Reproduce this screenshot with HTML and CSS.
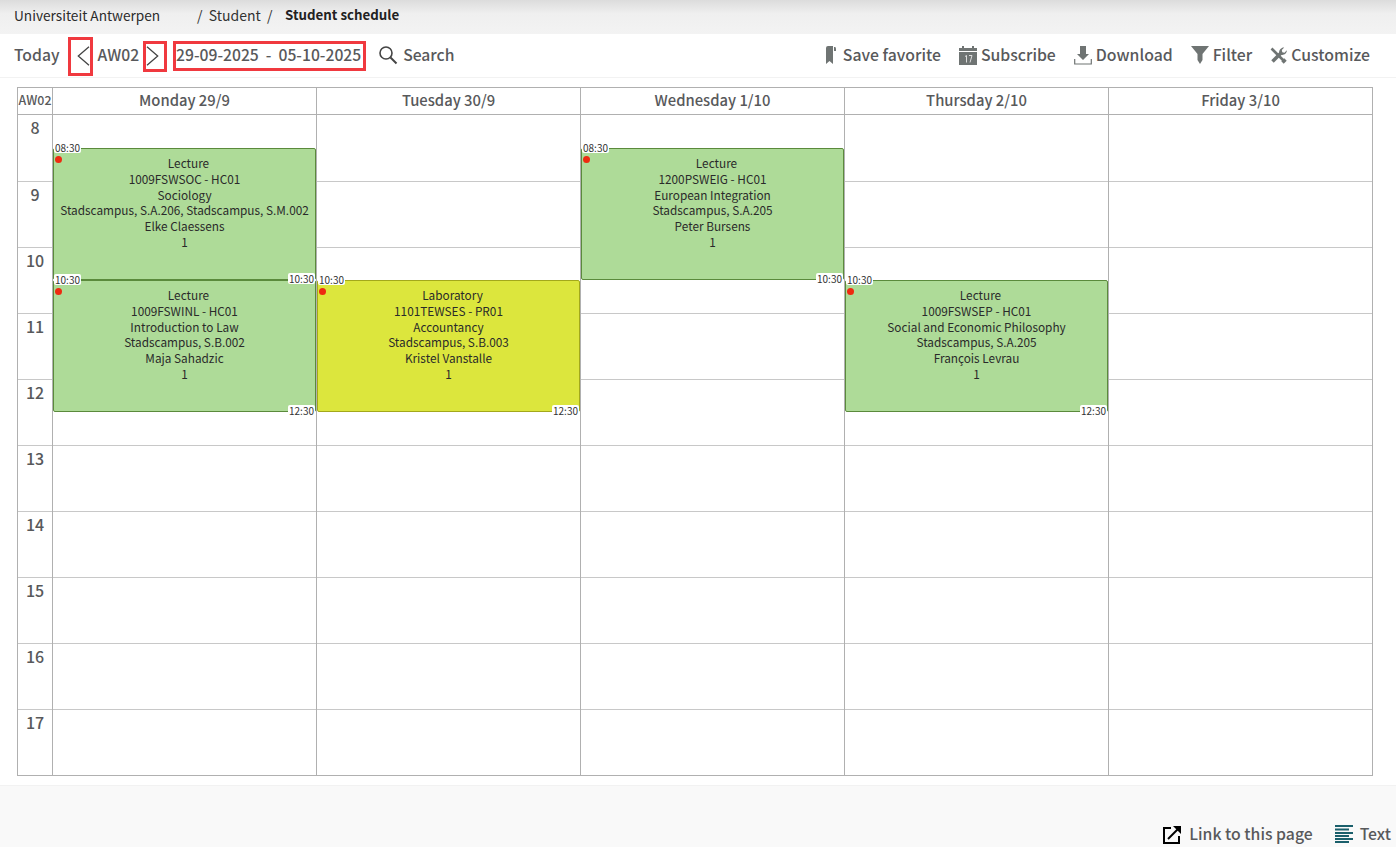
FILE: index.html
```html
<!DOCTYPE html>
<html lang="en">
<head>
<meta charset="utf-8">
<title>Student schedule</title>
<link rel="stylesheet" href="styles.css">
</head>
<body>
<div class="page">
  <header class="crumbs">
    <span class="crumb-home">Universiteit Antwerpen</span>
    <span class="crumb-path">/&nbsp; Student &nbsp;/</span>
    <strong class="crumb-current">Student schedule</strong>
  </header>
  <nav class="toolbar">
    <div class="tools-left">
      <span class="tool today">Today</span>
      <span class="boxed prev"><svg width="13" height="20" viewBox="0 0 13 20"><path d="M12 .7 1.300 10 12 19.300" fill="none" stroke="#444" stroke-width="1.300"/></svg></span>
      <span class="tool week">AW02</span>
      <span class="boxed next"><svg width="13" height="20" viewBox="0 0 13 20"><path d="M1 .7 11.700 10 1 19.300" fill="none" stroke="#444" stroke-width="1.300"/></svg></span>
      <span class="boxed range">29-09-2025&nbsp; -&nbsp; 05-10-2025</span>
      <span class="tool search"><svg width="20" height="20" viewBox="0 0 20 20"><circle cx="8" cy="8" r="6" fill="none" stroke="#444" stroke-width="1.6"/><path d="m12.5 12.5 6 6" stroke="#444" stroke-width="2"/></svg>Search</span>
    </div>
    <div class="tools-right">
      <span class="tool"><svg class="ico-save" width="12" height="20" viewBox="0 0 12 20"><path d="M1 3q0-2 2-2h5v18l-3.500-3L1 19z" fill="#6f7473"/><path d="M9 2h1q1 0 1 2v2H9z" fill="#6f7473"/></svg>Save favorite</span>
      <span class="tool"><svg width="18" height="19" viewBox="0 0 18 19"><rect x="0" y="2" width="18" height="3" fill="#6f7473"/><rect x="0" y="6" width="18" height="13" fill="#6f7473"/><rect x="3" y="0" width="2" height="3" fill="#6f7473"/><rect x="13" y="0" width="2" height="3" fill="#6f7473"/><path d="M6 10.500l1.500-1v7M10 9.500h3l-2 7" fill="none" stroke="#ddd"/></svg>Subscribe</span>
      <span class="tool"><svg width="18" height="20" viewBox="0 0 18 20"><path d="M6 1h6v8h3l-6 6-6-6h3z" fill="#6f7473"/><path d="M.7 14v5h16.600v-5" fill="none" stroke="#6f7473" stroke-width="1.200"/></svg>Download</span>
      <span class="tool"><svg width="18" height="20" viewBox="0 0 18 20"><path d="M0 1h18l-6.500 8v6L9 19l-2.500-4V9z" fill="#6f7473"/></svg>Filter</span>
      <span class="tool"><svg width="17" height="17" viewBox="0 0 17 17"><path d="M1.500 1.500 14 14" fill="none" stroke="#6f7473" stroke-width="2.600"/><path d="M12.500 15.500l3-3" stroke="#6f7473" stroke-width="3.400"/><path d="M2.500 14.500 11.500 5.500" stroke="#6f7473" stroke-width="3.600"/><path d="M9.300 6.500C8.500 3.500 11 .2 14.200.5L11.800 3l.5 2.200 2.200.5L16.800 3.200c.3 3.300-3.300 5.600-6 4.500z" fill="#6f7473"/></svg>Customize</span>
    </div>
  </nav>
  <main class="schedule">
    <div class="calendar">
      <div class="head corner">AW02</div>
      <div class="head">Monday 29/9</div>
      <div class="head">Tuesday 30/9</div>
      <div class="head">Wednesday 1/10</div>
      <div class="head">Thursday 2/10</div>
      <div class="head">Friday 3/10</div>

      <div class="hours">
        <div class="hour first">8</div><div class="hour">9</div><div class="hour">10</div><div class="hour">11</div><div class="hour">12</div><div class="hour">13</div><div class="hour">14</div><div class="hour">15</div><div class="hour">16</div><div class="hour">17</div>
      </div>

      <div class="day">
        <div class="slot first"></div><div class="slot"></div><div class="slot"></div><div class="slot"></div><div class="slot"></div><div class="slot"></div><div class="slot"></div><div class="slot"></div><div class="slot"></div><div class="slot"></div>
        <article class="event lecture from-830">
          <span class="time start">08:30</span><span class="dot"></span><span class="time end">10:30</span>
          <p>Lecture</p><p>1009FSWSOC - HC01</p><p>Sociology</p><p>Stadscampus, S.A.206, Stadscampus, S.M.002</p><p>Elke Claessens</p><p>1</p>
        </article>
        <article class="event lecture from-1030">
          <span class="time start">10:30</span><span class="dot"></span><span class="time end">12:30</span>
          <p>Lecture</p><p>1009FSWINL - HC01</p><p>Introduction to Law</p><p>Stadscampus, S.B.002</p><p>Maja Sahadzic</p><p>1</p>
        </article>
      </div>

      <div class="day">
        <div class="slot first"></div><div class="slot"></div><div class="slot"></div><div class="slot"></div><div class="slot"></div><div class="slot"></div><div class="slot"></div><div class="slot"></div><div class="slot"></div><div class="slot"></div>
        <article class="event lab from-1030">
          <span class="time start">10:30</span><span class="dot"></span><span class="time end">12:30</span>
          <p>Laboratory</p><p>1101TEWSES - PR01</p><p>Accountancy</p><p>Stadscampus, S.B.003</p><p>Kristel Vanstalle</p><p>1</p>
        </article>
      </div>

      <div class="day">
        <div class="slot first"></div><div class="slot"></div><div class="slot"></div><div class="slot"></div><div class="slot"></div><div class="slot"></div><div class="slot"></div><div class="slot"></div><div class="slot"></div><div class="slot"></div>
        <article class="event lecture from-830">
          <span class="time start">08:30</span><span class="dot"></span><span class="time end">10:30</span>
          <p>Lecture</p><p>1200PSWEIG - HC01</p><p>European Integration</p><p>Stadscampus, S.A.205</p><p>Peter Bursens</p><p>1</p>
        </article>
      </div>

      <div class="day">
        <div class="slot first"></div><div class="slot"></div><div class="slot"></div><div class="slot"></div><div class="slot"></div><div class="slot"></div><div class="slot"></div><div class="slot"></div><div class="slot"></div><div class="slot"></div>
        <article class="event lecture from-1030">
          <span class="time start">10:30</span><span class="dot"></span><span class="time end">12:30</span>
          <p>Lecture</p><p>1009FSWSEP - HC01</p><p>Social and Economic Philosophy</p><p>Stadscampus, S.A.205</p><p>François Levrau</p><p>1</p>
        </article>
      </div>

      <div class="day">
        <div class="slot first"></div><div class="slot"></div><div class="slot"></div><div class="slot"></div><div class="slot"></div><div class="slot"></div><div class="slot"></div><div class="slot"></div><div class="slot"></div><div class="slot"></div>
      </div>
    </div>
  </main>
  <footer class="foot">
    <span class="tool"><svg width="19" height="19" viewBox="0 0 19 19"><path d="M8 3H1v15h15v-7" fill="none" stroke="#000" stroke-width="2"/><path d="M5 14 17 2" stroke="#000" stroke-width="2"/><path d="M10 1h8v8z" fill="#000"/></svg>Link to this page</span>
    <span class="tool"><svg width="18" height="18" viewBox="0 0 18 18"><path d="M0 1h18M0 4.500h14M0 8h18M0 11h14M0 14h18M0 17h14" stroke="#1a5f6b" stroke-width="1.800"/></svg>Text</span>
  </footer>
</div>
</body>
</html>
```

FILE: styles.css
```css
* { box-sizing: border-box; }
html, body { margin: 0; padding: 0; height: 100%; }
body {
  background: #fff;
  color: #555;
  font-family: "Noto Sans CJK SC", "Noto Sans", sans-serif;
  overflow: hidden;
}
.page { display: flex; flex-direction: column; height: 847px; }

.crumbs {
  height: 34px;
  flex: none;
  display: flex;
  align-items: center;
  padding: 0 0 4px 14px;
  font-size: 14px;
  line-height: 20px;
  color: #2b2b2b;
  background: linear-gradient(#dcdcdc 0, #efefef 40%, #f3f3f3 100%);
}
.crumb-home { width: 183px; font-size: 13.65px; }
.crumb-path { width: 88px; color: #333; white-space: nowrap; }
.crumb-current { font-weight: 700; color: #222; font-size: 13.3px; }

.toolbar {
  height: 44px;
  flex: none;
  display: flex;
  justify-content: space-between;
  align-items: center;
  padding: 1px 26px 0 14px;
  border-bottom: 1px solid #f2f2f2;
}
.tools-left, .tools-right { display: flex; align-items: center; }
.tools-right { gap: 18px; }
.tool {
  display: inline-flex;
  align-items: center;
  gap: 4px;
  padding-bottom: 2px;
  font-size: 15.7px;
  line-height: 22px;
  font-weight: 500;
  color: #58595b;
  white-space: nowrap;
}
.tools-right .tool { font-size: 15.8px; }
.ico-save { margin-right: 2px; }
.boxed {
  display: inline-flex;
  align-items: center;
  justify-content: center;
  padding: 0 2px 2px 0;
  border: 3px solid #f0393f;
  font-size: 15.7px;
  font-weight: 500;
  line-height: 22px;
  color: #58595b;
  white-space: nowrap;
}
.today { margin-right: 9px; }
.prev { width: 25px; height: 39px; padding: 0 0 0 5px; }
.week { margin: 0 4px; }
.next { width: 24px; height: 31px; padding: 0 5px 0 0; }
.range { width: 193px; height: 30px; margin-left: 6px; }
.search { margin-left: 12px; gap: 5px; }

.schedule { flex: 1; padding: 9px 0 0 17px; }
.calendar {
  display: grid;
  grid-template-columns: 34px repeat(5, 264px);
  grid-template-rows: 27px auto;
  width: 1356px;
  border: 1px solid #b0b0b0;
}
.head {
  display: flex;
  align-items: center;
  justify-content: center;
  padding-bottom: 3px;
  font-size: 14.8px;
  line-height: 20px;
  font-weight: 500;
  color: #58595b;
  border-left: 1px solid #b0b0b0;
  border-bottom: 1px solid #b0b0b0;
}
.corner { font-size: 12.4px; border-left: 0; }
.hours { display: flex; flex-direction: column; }
.hour {
  height: 66px;
  font-size: 16px;
  line-height: 22px;
  font-weight: 500;
  text-align: center;
  padding-top: 1px;
  color: #58595b;
  border-bottom: 1px solid #c8c8c8;
}
.hour.first { height: 67px; }
.hour:last-child { border-bottom: 0; height: 65px; }
.day {
  position: relative;
  display: flex;
  flex-direction: column;
  border-left: 1px solid #b0b0b0;
}
.slot { height: 66px; border-bottom: 1px solid #c8c8c8; }
.slot.first { height: 67px; }
.day .slot:nth-child(10) { border-bottom: 0; height: 65px; }

.event {
  position: absolute;
  left: 0;
  width: 263px;
  height: 132px;
  padding-top: 6px;
  font-size: 11.8px;
  line-height: 15.8px;
  color: #333;
  text-align: center;
  border: 1px solid;
  border-radius: 2px;
}
.event p { margin: 0; white-space: nowrap; color: #2a2a2a; }
.event p:first-of-type { padding-left: 8px; }
.from-830 { top: 33px; }
.from-1030 { top: 165px; }
.lecture { background: #aedb98; border-color: #5b8a3c; }
.lab { background: #dce63d; border-color: #a3a81b; }
.time {
  position: absolute;
  z-index: 1;
  padding: 0 1px;
  font-size: 10px;
  line-height: 11px;
  background: #fff;
  color: #333;
  border-radius: 2px;
}
.start { top: -7px; left: 0; }
.end { bottom: -5px; right: 0; }
.dot {
  position: absolute;
  top: 7px;
  left: 1px;
  width: 7px;
  height: 7px;
  border-radius: 50%;
  background: #ee2a10;
}

.foot {
  height: 62px;
  flex: none;
  display: flex;
  justify-content: flex-end;
  align-items: flex-end;
  gap: 22px;
  padding: 0 5px 0 0;
  background: #f9f9f9;
  border-top: 1px solid #f2f2f2;
}
.foot .tool { gap: 7px; padding-bottom: 2px; font-size: 15.8px; }
```
